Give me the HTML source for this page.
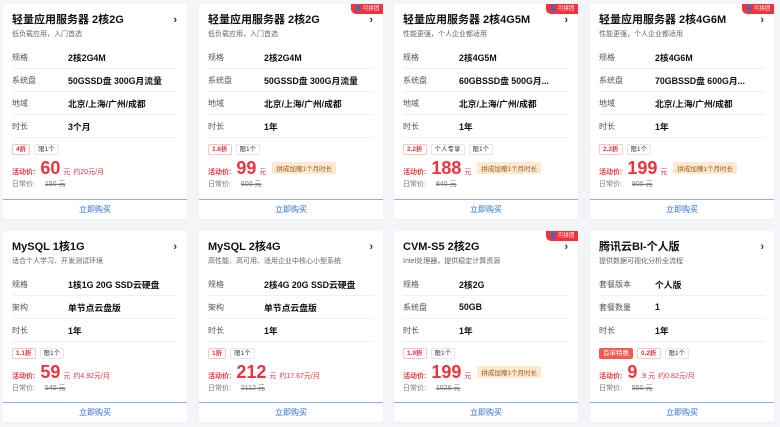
<!DOCTYPE html>
<html><head><meta charset="utf-8"><style>
*{margin:0;padding:0;box-sizing:border-box}
body{width:780px;height:427px;background:#f3f5f8;font-family:"Liberation Sans","Noto Sans CJK SC",sans-serif;position:relative;overflow:hidden;color:#000}
.card{position:absolute;width:184px;background:#fff;box-shadow:0 1px 3px rgba(0,0,0,.04)}
.t{position:absolute;left:9px;top:6px;font-size:11px;font-weight:bold;line-height:20px;color:#111}
.arr{position:absolute;right:10px;top:6px;font-size:11px;line-height:20px;font-weight:bold;color:#333}
.s{position:absolute;left:9px;top:25px;font-size:7px;line-height:12px;color:#666}
.rows{position:absolute;left:9px;right:9px;top:42px}
.r{height:23px;border-bottom:1px solid #eef0f3;display:flex;align-items:center;font-size:8px}
.r .l{width:56px;color:#555}
.r .v{font-weight:bold;font-size:8.8px;color:#111}
.tags{position:absolute;left:9px;display:flex;gap:4px}
.tg{font-size:6.5px;line-height:9px;height:11px;padding:0 3px;border:1px solid #e5e7ec;border-radius:2px;color:#333}
.tg.red{border-color:#fbc6c6;color:#e8323c;font-weight:bold}
.tg.fill{background:#f5584d;border-color:#f5584d;color:#fff}
.price{position:absolute;left:9px;display:flex;align-items:baseline;color:#f0333d;white-space:nowrap}
.price .a{font-size:7px;font-weight:bold}
.price .n{font-size:18px;font-weight:bold;margin-left:5px;line-height:18px}
.price .y{font-size:7px;margin-left:3px}
.price .m{font-size:7px;margin-left:3px}
.pin{font-size:6.5px;background:#fde9cf;color:#9a5a1a;padding:1px 4px;border-radius:2px;margin-left:6px;align-self:center}
.norm{position:absolute;left:9px;font-size:7px;color:#777}
.norm s{margin-left:8px}
.buy{position:absolute;left:0;right:0;bottom:0;height:20px;border-top:1px solid #8fb1ea;text-align:center;font-size:8px;line-height:19px;color:#2e6bd6}
.badge{position:absolute;right:0;top:0;height:10px;width:32px;background:#f0333d;color:#fff;font-size:5.5px;line-height:10px;text-align:center;border-bottom-left-radius:5px}
</style></head><body>

<div class="card" style="left:3px;top:4px;height:215px">
<div class="t">轻量应用服务器 2核2G</div><div class="arr">›</div>
<div class="s">低负载应用，入门首选</div>
<div class="rows"><div class="r"><span class="l">规格</span><span class="v">2核2G4M</span></div><div class="r"><span class="l">系统盘</span><span class="v">50GSSD盘 300G月流量</span></div><div class="r"><span class="l">地域</span><span class="v">北京/上海/广州/成都</span></div><div class="r"><span class="l">时长</span><span class="v">3个月</span></div></div>
<div class="tags" style="top:140px"><span class="tg red">4折</span><span class="tg">限1个</span></div>
<div class="price" style="top:155px"><span class="a">活动价:</span><span class="n">60</span><span class="y">元</span><span class="m">约20元/月</span></div>
<div class="norm" style="top:175px">日常价: <s>150 元</s></div>
<div class="buy">立即购买</div></div>

<div class="card" style="left:199px;top:4px;height:215px"><div class="badge">👤 可拼团</div>
<div class="t">轻量应用服务器 2核2G</div><div class="arr">›</div>
<div class="s">低负载应用，入门首选</div>
<div class="rows"><div class="r"><span class="l">规格</span><span class="v">2核2G4M</span></div><div class="r"><span class="l">系统盘</span><span class="v">50GSSD盘 300G月流量</span></div><div class="r"><span class="l">地域</span><span class="v">北京/上海/广州/成都</span></div><div class="r"><span class="l">时长</span><span class="v">1年</span></div></div>
<div class="tags" style="top:140px"><span class="tg red">1.6折</span><span class="tg">限1个</span></div>
<div class="price" style="top:155px"><span class="a">活动价:</span><span class="n">99</span><span class="y">元</span><span class="pin">拼成加赠1个月时长</span></div>
<div class="norm" style="top:175px">日常价: <s>600 元</s></div>
<div class="buy">立即购买</div></div>

<div class="card" style="left:394px;top:4px;height:215px"><div class="badge">👤 可拼团</div>
<div class="t">轻量应用服务器 2核4G5M</div><div class="arr">›</div>
<div class="s">性能更强，个人企业都适用</div>
<div class="rows"><div class="r"><span class="l">规格</span><span class="v">2核4G5M</span></div><div class="r"><span class="l">系统盘</span><span class="v">60GBSSD盘 500G月...</span></div><div class="r"><span class="l">地域</span><span class="v">北京/上海/广州/成都</span></div><div class="r"><span class="l">时长</span><span class="v">1年</span></div></div>
<div class="tags" style="top:140px"><span class="tg red">2.2折</span><span class="tg">个人专享</span><span class="tg">限1个</span></div>
<div class="price" style="top:155px"><span class="a">活动价:</span><span class="n">188</span><span class="y">元</span><span class="pin">拼成加赠1个月时长</span></div>
<div class="norm" style="top:175px">日常价: <s>840 元</s></div>
<div class="buy">立即购买</div></div>

<div class="card" style="left:590px;top:4px;height:215px"><div class="badge">👤 可拼团</div>
<div class="t">轻量应用服务器 2核4G6M</div><div class="arr">›</div>
<div class="s">性能更强，个人企业都适用</div>
<div class="rows"><div class="r"><span class="l">规格</span><span class="v">2核4G6M</span></div><div class="r"><span class="l">系统盘</span><span class="v">70GBSSD盘 600G月...</span></div><div class="r"><span class="l">地域</span><span class="v">北京/上海/广州/成都</span></div><div class="r"><span class="l">时长</span><span class="v">1年</span></div></div>
<div class="tags" style="top:140px"><span class="tg red">2.2折</span><span class="tg">限1个</span></div>
<div class="price" style="top:155px"><span class="a">活动价:</span><span class="n">199</span><span class="y">元</span><span class="pin">拼成加赠1个月时长</span></div>
<div class="norm" style="top:175px">日常价: <s>900 元</s></div>
<div class="buy">立即购买</div></div>

<div class="card" style="left:3px;top:231px;height:191px">
<div class="t">MySQL 1核1G</div><div class="arr">›</div>
<div class="s">适合个人学习、开发测试环境</div>
<div class="rows"><div class="r"><span class="l">规格</span><span class="v">1核1G 20G SSD云硬盘</span></div><div class="r"><span class="l">架构</span><span class="v">单节点云盘版</span></div><div class="r"><span class="l">时长</span><span class="v">1年</span></div></div>
<div class="tags" style="top:117px"><span class="tg red">1.1折</span><span class="tg">限1个</span></div>
<div class="price" style="top:132px"><span class="a">活动价:</span><span class="n">59</span><span class="y">元</span><span class="m">约4.92元/月</span></div>
<div class="norm" style="top:152px">日常价: <s>540 元</s></div>
<div class="buy">立即购买</div></div>

<div class="card" style="left:199px;top:231px;height:191px">
<div class="t">MySQL 2核4G</div><div class="arr">›</div>
<div class="s">高性能、高可用、适用企业中核心小型系统</div>
<div class="rows"><div class="r"><span class="l">规格</span><span class="v">2核4G 20G SSD云硬盘</span></div><div class="r"><span class="l">架构</span><span class="v">单节点云盘版</span></div><div class="r"><span class="l">时长</span><span class="v">1年</span></div></div>
<div class="tags" style="top:117px"><span class="tg red">1折</span><span class="tg">限1个</span></div>
<div class="price" style="top:132px"><span class="a">活动价:</span><span class="n">212</span><span class="y">元</span><span class="m">约17.67元/月</span></div>
<div class="norm" style="top:152px">日常价: <s>2112 元</s></div>
<div class="buy">立即购买</div></div>

<div class="card" style="left:394px;top:231px;height:191px"><div class="badge">👤 可拼团</div>
<div class="t">CVM-S5 2核2G</div><div class="arr">›</div>
<div class="s">Intel处理器，提供稳定计算资源</div>
<div class="rows"><div class="r"><span class="l">规格</span><span class="v">2核2G</span></div><div class="r"><span class="l">系统盘</span><span class="v">50GB</span></div><div class="r"><span class="l">时长</span><span class="v">1年</span></div></div>
<div class="tags" style="top:117px"><span class="tg red">1.9折</span><span class="tg">限1个</span></div>
<div class="price" style="top:132px"><span class="a">活动价:</span><span class="n">199</span><span class="y">元</span><span class="pin">拼成加赠1个月时长</span></div>
<div class="norm" style="top:152px">日常价: <s>1026 元</s></div>
<div class="buy">立即购买</div></div>

<div class="card" style="left:590px;top:231px;height:191px">
<div class="t">腾讯云BI-个人版</div><div class="arr">›</div>
<div class="s">提供数据可视化分析全流程</div>
<div class="rows"><div class="r"><span class="l">套餐版本</span><span class="v">个人版</span></div><div class="r"><span class="l">套餐数量</span><span class="v">1</span></div><div class="r"><span class="l">时长</span><span class="v">1年</span></div></div>
<div class="tags" style="top:117px"><span class="tg fill">首单特惠</span><span class="tg red">0.2折</span><span class="tg">限1个</span></div>
<div class="price" style="top:132px"><span class="a">活动价:</span><span class="n">9</span><span class="y">.9 元</span><span class="m">约0.82元/月</span></div>
<div class="norm" style="top:152px">日常价: <s>550 元</s></div>
<div class="buy">立即购买</div></div>

</body></html>
